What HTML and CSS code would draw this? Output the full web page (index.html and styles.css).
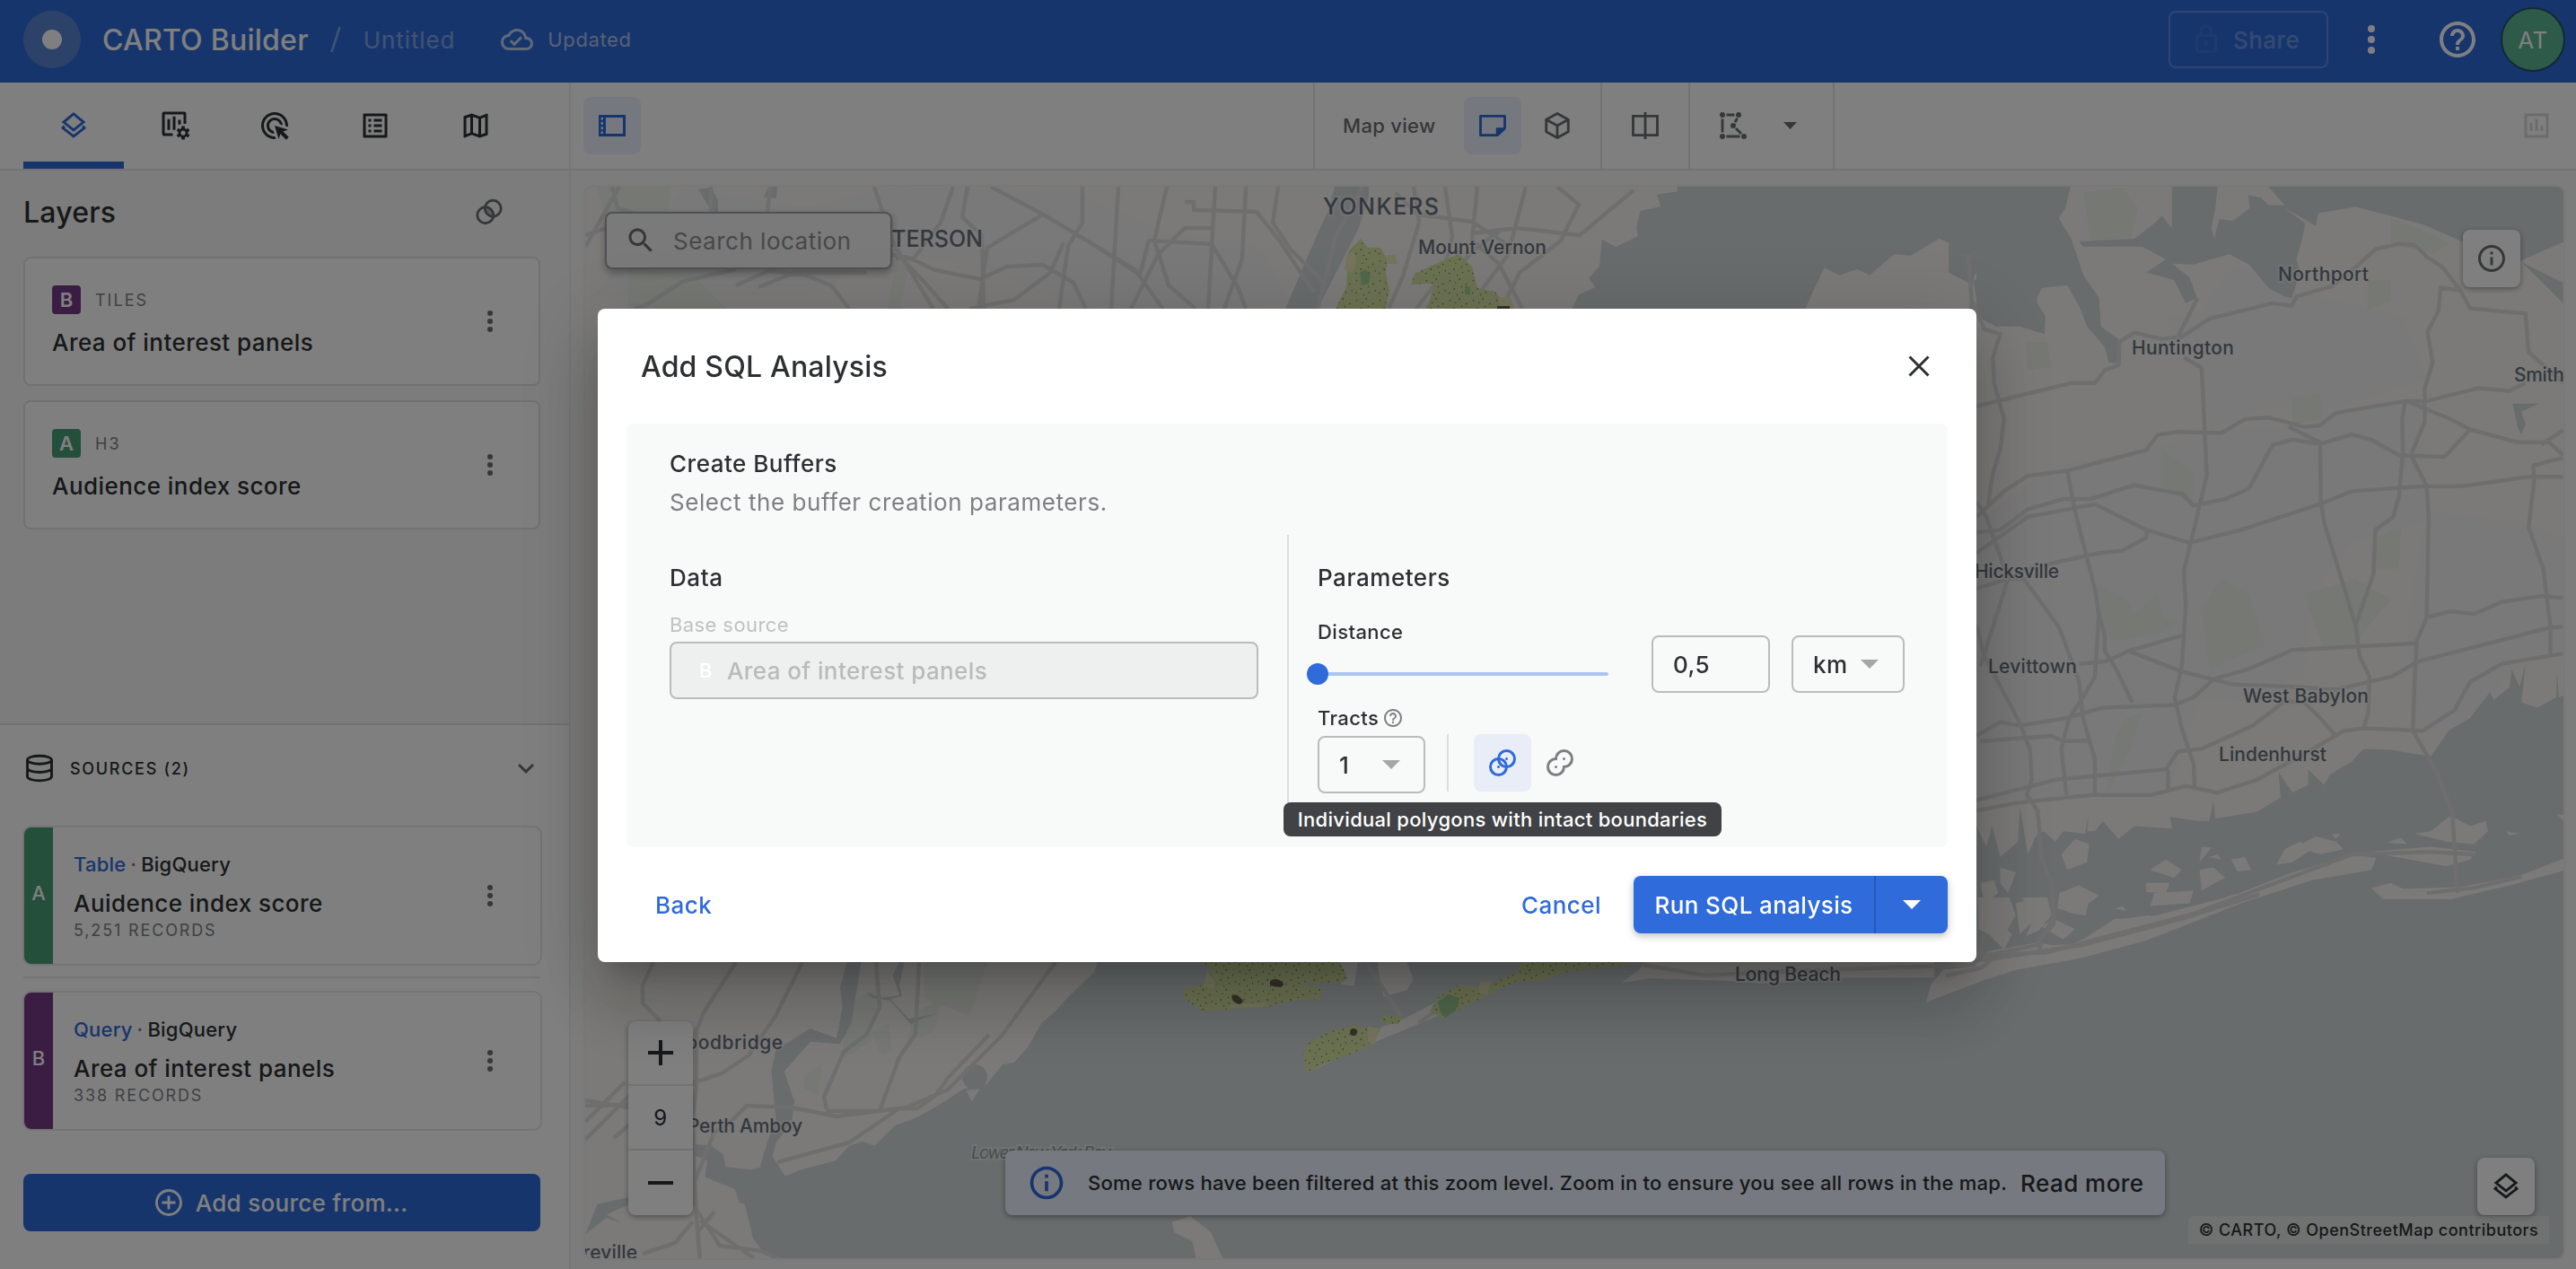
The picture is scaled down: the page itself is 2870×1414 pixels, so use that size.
FILE: index.html
```html
<!DOCTYPE html>
<html lang="en">
<head>
<meta charset="utf-8">
<title>CARTO Builder</title>
<link rel="stylesheet" href="styles.css">
</head>
<body>
<svg class="defs" width="0" height="0">
  <defs>
    <symbol id="i-layers" viewBox="0 0 24 24"><path d="M12 3.3 19.4 9.4 12 15.3 4.6 9.4zM5.2 12.3 4 13.7l8 6.2 8-6.2-1.200-1.400" fill="none" stroke="currentColor" stroke-width="1.9"/></symbol>
    <symbol id="i-more" viewBox="0 0 24 24"><circle cx="12" cy="6" r="2"/><circle cx="12" cy="12" r="2"/><circle cx="12" cy="18" r="2"/></symbol>
    <symbol id="i-help" viewBox="0 0 24 24"><path d="M11 18h2v-2h-2v2zm1-16C6.480 2 2 6.480 2 12s4.480 10 10 10 10-4.480 10-10S17.520 2 12 2zm0 18c-4.410 0-8-3.590-8-8s3.590-8 8-8 8 3.590 8 8-3.590 8-8 8zm0-14c-2.210 0-4 1.790-4 4h2c0-1.100.9-2 2-2s2 .9 2 2c0 2-3 1.750-3 5h2c0-2.250 3-2.500 3-5 0-2.210-1.790-4-4-4z"/></symbol>
    <symbol id="i-info" viewBox="0 0 24 24"><path d="M11 7h2v2h-2zm0 4h2v6h-2zm1-9C6.480 2 2 6.480 2 12s4.480 10 10 10 10-4.480 10-10S17.520 2 12 2zm0 18c-4.410 0-8-3.590-8-8s3.590-8 8-8 8 3.590 8 8-3.590 8-8 8z"/></symbol>
    <symbol id="i-caret" viewBox="0 0 20 10"><path d="M0 0h20L10 10z"/></symbol>
    <symbol id="i-overlap" viewBox="0 0 24 24"><g fill="none" stroke="currentColor" stroke-width="2"><circle cx="15" cy="9" r="6"/><circle cx="9" cy="15" r="6"/></g><circle cx="15" cy="9" r="1"/><circle cx="9" cy="15" r="1"/></symbol>
    <pattern id="hex" width="26" height="22" patternUnits="userSpaceOnUse"><rect width="26" height="22" fill="#d7e4a4"/><path d="M3 4l1 1.500M14 2l.5 2M21 9l1.500-1M8 13l.5 2M17 17l1 1.500M2 19l1.500-1M11 20l1 1M24 15l.5 1.500M9 7l1.500.5M16 11l1 1" stroke="#7d8560" stroke-width="1.200"/></pattern>
  </defs>
</svg>

<header class="topbar">
  <div class="logo"><i></i></div>
  <span class="brand">CARTO Builder</span>
  <svg class="slash" width="12" height="32" viewBox="0 0 12 32"><path d="M10.500 2 1.500 30" stroke="currentColor" stroke-width="2.500"/></svg>
  <span class="untitled">Untitled</span>
  <svg class="cloud" width="36" height="36" viewBox="0 0 24 24"><path d="M19.350 10.040C18.670 6.590 15.640 4 12 4 9.110 4 6.600 5.640 5.350 8.040 2.340 8.360 0 10.910 0 14c0 3.310 2.690 6 6 6h13c2.760 0 5-2.240 5-5 0-2.640-2.050-4.780-4.650-4.960zM19 18H6c-2.210 0-4-1.790-4-4 0-2.050 1.530-3.760 3.560-3.970l1.070-.11.5-.95C8.080 7.140 9.940 6 12 6c2.620 0 4.880 1.860 5.390 4.430l.3 1.500 1.530.11c1.560.1 2.780 1.410 2.780 2.960 0 1.650-1.350 3-3 3zm-9-3.820-2.090-2.090L6.500 13.500 10 17l6.010-6.010-1.410-1.410z"/></svg>
  <span class="updated">Updated</span>
  <div class="top-right">
    <div class="share"><svg width="36" height="36" viewBox="0 0 24 24"><path d="M18 8h-1V6c0-2.760-2.240-5-5-5S7 3.240 7 6v2H6c-1.100 0-2 .9-2 2v10c0 1.100.9 2 2 2h12c1.100 0 2-.9 2-2V10c0-1.100-.9-2-2-2zM9 6c0-1.660 1.340-3 3-3s3 1.340 3 3v2H9zm9 14H6V10h12zm-6-3c1.100 0 2-.9 2-2s-.9-2-2-2-2 .9-2 2 .9 2 2 2z"/></svg><span>Share</span></div>
    <svg class="t-more" width="48" height="48"><use href="#i-more"/></svg>
    <svg class="t-help" width="48" height="48"><use href="#i-help"/></svg>
    <div class="avatar">AT</div>
  </div>
</header>

<div class="workspace">
  <aside class="sidebar">
    <nav class="tabs">
      <div class="tab active"><svg width="36" height="36"><use href="#i-layers"/></svg></div>
      <div class="tab"><svg width="44" height="40" viewBox="-2.700 0 29.400 26.700"><path d="M11 20H4.500c-.5 0-.5 0-.5-.5v-15c0-.5 0-.5.5-.5h15c.5 0 .5 0 .5.5V12M8 8.500V16.500M12 6.500V16.500M16 9v3.500" fill="none" stroke="currentColor" stroke-width="2"/><circle cx="18.700" cy="18.700" r="2.700" fill="none" stroke="currentColor" stroke-width="1.900"/><path d="M18.700 13.700v2M18.700 21.700v2M14.400 16.200l1.700 1M21.300 20.200l1.700 1M14.400 21.200l1.700-1M21.300 17.200l1.700-1" stroke="currentColor" stroke-width="2.400"/></svg></div>
      <div class="tab"><svg width="36" height="36" viewBox="0 0 24 24"><path d="M11.710 17.990C8.530 17.840 6 15.220 6 12c0-3.310 2.690-6 6-6 3.220 0 5.840 2.530 5.990 5.710l-2.100-.63C15.480 9.310 13.890 8 12 8c-2.210 0-4 1.790-4 4 0 1.890 1.310 3.480 3.080 3.890zM22 12c0 .3-.01.6-.04.9l-1.970-.59C20 12.210 20 12.100 20 12c0-4.420-3.580-8-8-8s-8 3.580-8 8 3.580 8 8 8c.1 0 .21 0 .31-.01l.59 1.970C12.600 21.990 12.300 22 12 22 6.480 22 2 17.520 2 12S6.480 2 12 2s10 4.480 10 10zm-3.770 4.260L22 15l-10-3 3 10 1.260-3.770 4.270 4.270 1.980-1.980z"/></svg></div>
      <div class="tab"><svg width="36" height="36" viewBox="0 0 24 24"><path d="M19 5v14H5V5h14m1.100-2H3.900c-.5 0-.9.4-.9.9v16.200c0 .4.4.9.9.9h16.200c.4 0 .9-.5.9-.9V3.900c0-.5-.5-.9-.9-.9zM11 7h6v2h-6V7zm0 4h6v2h-6v-2zm0 4h6v2h-6zM7 7h2v2H7zm0 4h2v2H7zm0 4h2v2H7z"/></svg></div>
      <div class="tab"><svg width="36" height="36" viewBox="0 0 24 24"><path d="M20.500 3l-.16.03L15 5.100 9 3 3.360 4.900c-.21.07-.36.25-.36.48V20.500c0 .28.22.5.5.5l.16-.03L9 18.900l6 2.100 5.640-1.900c.21-.07.36-.25.36-.48V3.500c0-.28-.22-.5-.5-.5zM10 5.470l4 1.400v11.660l-4-1.400V5.470zm-5 .99l3-1.010v11.700l-3 1.160V6.460zm14 11.080l-3 1.010V6.860l3-1.160v11.840z"/></svg></div>
    </nav>
    <section class="layers">
      <div class="layers-head"><h2>Layers</h2><svg width="36" height="36" viewBox="0 0 24 24"><g fill="none" stroke="currentColor" stroke-width="1.900"><circle cx="14.800" cy="9.500" r="6"/><circle cx="9.200" cy="14.500" r="6"/></g><path d="M9.500 9.500c3 0 5.500 2.500 5 5.500-3.500 0-6-2.500-5-5.500z" opacity=".45"/></svg></div>
      <article class="layer">
        <div><p class="kind"><b class="purple">B</b><span>TILES</span></p><h3>Area of interest panels</h3></div>
        <svg width="36" height="36"><use href="#i-more"/></svg>
      </article>
      <article class="layer">
        <div><p class="kind"><b class="green">A</b><span>H3</span></p><h3>Audience index score</h3></div>
        <svg width="36" height="36"><use href="#i-more"/></svg>
      </article>
    </section>
    <section class="sources">
      <div class="sources-head">
        <svg width="36" height="36" viewBox="0 0 24 24"><g fill="none" stroke="currentColor" stroke-width="1.900"><ellipse cx="12" cy="5.800" rx="9" ry="3"/><path d="M3 5.800v12.400c0 1.700 4 3 9 3s9-1.300 9-3V5.800M3 12c0 1.700 4 3 9 3s9-1.300 9-3"/></g></svg>
        <span>SOURCES (2)</span>
        <svg class="chev" width="36" height="36" viewBox="0 0 24 24"><path d="M16.590 8.590 12 13.170 7.410 8.590 6 10l6 6 6-6z"/></svg>
      </div>
      <article class="source">
        <b class="strip green">A</b>
        <div><p class="conn"><em>Table</em><s>·</s><span>BigQuery</span></p><h3>Auidence index score</h3><p class="records">5,251 RECORDS</p></div>
        <svg width="36" height="36"><use href="#i-more"/></svg>
      </article>
      <hr>
      <article class="source">
        <b class="strip purple">B</b>
        <div><p class="conn"><em>Query</em><s>·</s><span>BigQuery</span></p><h3>Area of interest panels</h3><p class="records">338 RECORDS</p></div>
        <svg width="36" height="36"><use href="#i-more"/></svg>
      </article>
      <div class="add-source"><svg width="36" height="36" viewBox="0 0 24 24"><g fill="none" stroke="currentColor" stroke-width="1.900"><circle cx="12" cy="12" r="9"/><path d="M12 7v10M7 12h10"/></g></svg><span>Add source from...</span></div>
    </section>
  </aside>

  <main class="main">
    <div class="toolbar">
      <div class="tool on"><svg width="36" height="36" viewBox="0 0 24 24"><path fill-rule="evenodd" d="M2 4h20v16H2zM3.700 6v1.700h1.600V6zM3.700 9.200v2h1.600v-2zM3.700 12.800v2h1.600v-2zM3.700 16.300V18h1.600v-1.700zM7.300 6v12H20V6z"/></svg></div>
      <div class="map-tools">
        <div class="cell view"><span class="mv">Map view</span>
          <div class="tool on"><svg width="36" height="36" viewBox="0 0 24 24"><path d="M21 4.900v9L15.500 19.100H3V4.900z" fill="none" stroke="currentColor" stroke-width="1.900" stroke-linejoin="round"/><path d="M14.500 20v-6.500H22z"/></svg></div>
          <div class="tool"><svg width="36" height="36" viewBox="0 0 24 24"><path d="M12 3 20.200 7.500v9L12 21 3.800 16.500v-9zM3.800 7.500 12 12l8.200-4.500M12 12v9" fill="none" stroke="currentColor" stroke-width="1.900" stroke-linejoin="round"/></svg></div></div>
        <div class="cell split"><svg width="36" height="36" viewBox="0 0 24 24"><path d="M3 4.900h18v14.200H3zM12 2v20" fill="none" stroke="currentColor" stroke-width="1.900"/></svg></div>
        <div class="cell poly"><svg width="36" height="36" viewBox="0 0 24 24"><path d="M7 4h6M4 7v10M7 20h10M15 6.500l-1.600 3M14 14l4 4" fill="none" stroke="currentColor" stroke-width="1.900"/><circle cx="4" cy="4" r="2"/><circle cx="16" cy="4" r="2"/><circle cx="12" cy="12" r="2"/><circle cx="20" cy="20" r="2"/><circle cx="4" cy="20" r="2"/></svg><svg class="caret" width="15" height="8" viewBox="0 0 20 10" preserveAspectRatio="none"><path d="M0 0h20L10 10z"/></svg></div>
      </div>
      <svg class="dim" width="36" height="36" viewBox="0 0 24 24"><path d="M4 4h16v16H4zM8 10v6M12 7v9M16 12v4" fill="none" stroke="currentColor" stroke-width="1.900"/></svg>
    </div>

    <div class="map">
      <svg class="basemap" width="2204" height="1194" viewBox="652 208 2204 1194">
        <rect class="land" x="652" y="208" width="2204" height="1194"/>
        <g transform="matrix(.44005 0 0 .57403 2180 180)">
          <path class="urban" d="M50 700 250 590 480 560 640 520 900 510 960 480 1180 470 1190 700 1000 740 900 840 880 1000 760 1050 620 1040 560 1180 520 1230 50 1240zM520 300 620 290 700 200 900 260 1130 300 1190 420 960 480 780 480 640 520 620 400zM1190 680 1440 700 1535 730V950L1440 970 1280 1090 1160 1100 1140 900z"/>
          <path class="park" d="M350 820 430 850 450 880 510 835 520 885 565 895 500 920 400 930 360 900zM620 870 670 810 740 840 780 940 700 965 640 985zM880 840 1010 810 1100 850 1000 940 930 950zM1060 730 1125 710 1120 790 1060 790zM320 60 420 50 460 90 440 150 340 155zM1040 230 1100 230 1100 270 1040 290zM430 1080 470 1070 440 1140 380 1230 400 1120zM1100 110 1200 140 1250 160 1200 180 1100 160zM520 560 600 600 600 660 520 640zM850 460 920 450 930 500 850 510zM175 350 230 350 240 400 180 405z"/>
        </g>
        <path class="urban" d="M660 330 760 210 900 230 1000 208 1200 215 1300 260 1400 270 1440 340 1200 344 1100 300 1000 280 900 330z"/>
        <path class="park" d="M665 208h82l-5 50-60 12zM700 300l70 5 40 39H700zM1000 285h15l-12 59h-15zM940 1120l40-20-10 60-30 20zM1030 1072h70l-20 60-50-20zM1020 1130l30-20-10 40-30 10zM970 1150l20-10 4 30-12 6zM895 1200l22-16-6 36-14-6z"/>
        <g class="water">
          <path transform="matrix(.91200 0 0 .33333 1440 0)" d="M470 600V640L445 650 450 690 425 705 420 760 422 790 395 825 378 800 375 890 362 930 370 960 350 985 340 1040H625L640 950 650 895 668 920 690 900 705 920 735 850 755 855 790 797 804 815V600zM838 1040 832 940 850 910 866 880 868 960 872 1040zM880 990 900 905 912 950 908 1040H885z"/>
          <path transform="matrix(.44005 0 0 .57403 2180 180)" d="M-20 40H290L275 90 258 110 290 150 320 220 360 265 365 320 410 345 405 392 385 390 375 360 330 320 310 280 280 240 215 245 200 270 225 300 222 335 160 320 100 320 60 305 30 290 40 240-20 215V182L30 182 80 170 150 142 160 175 208 180 208 208 175 210 150 270 105 275 130 230 125 195 90 190 45 220 35 270 50 300V40z"/>
          <path transform="matrix(.44005 0 0 .57403 2180 180)" d="M-20 40H290L275 90 258 110 290 150 208 180 160 175 150 142 80 170 30 182-20 182z"/>
          <path transform="matrix(.44005 0 0 .57403 2180 180)" d="M208 180 290 150 320 220 360 265 365 320 310 280 280 240 215 245 175 230z"/>
          <path transform="matrix(.44005 0 0 .57403 2180 180)" d="M545 40H662L655 90 645 130 652 150 665 112 700 115 742 90 738 65 770 70 790 85 830 85 780 40H1540V155L1440 188 1425 195 1280 155 1180 122 1010 88 915 100 910 125 830 90 882 120 875 150 860 190 870 215 848 265 830 262 790 245 740 200 690 180 600 200 545 198 590 225 608 265 580 275 550 230 480 215 530 190 470 165 320 165 310 155 450 150 500 120 520 105 545 130zM1430 195 1535 235V275L1490 240zM1408 470 1475 470 1430 485 1440 510 1430 530 1420 515z"/>
          <path transform="matrix(.44005 0 0 .57403 2180 180)" d="M1540 1035 1525 1040 1520 990 1518 1040 1470 1060 1430 1050 1440 975 1425 1020 1405 985 1400 1020 1360 1045 1350 1030 1300 1080 1245 1105 1200 1155 1100 1142 1030 1140 1000 1165 945 1190 930 1210 890 1180 890 1210 850 1225 815 1185 820 1235 760 1262 700 1270 655 1275 650 1240 640 1280 612 1280 540 1272 545 1295 450 1290 410 1315 370 1280 350 1300 330 1300 335 1265 325 1305 270 1300 250 1320 220 1300 200 1310 180 1345 160 1250 155 1320 110 1350 90 1290 75 1330 50 1290V1620H1540z"/>
          <path d="M1487 208h38l0 12-12 36-45 88h-36l30-70 18-40z"/>
          <path transform="matrix(.51020 0 0 .33333 640 1060)" d="M1145 20 1135 70 1080 150 1050 200 1020 240 990 320 960 372 935 378 900 445 850 460 820 490 790 520 740 560 700 582 655 650 630 635 600 650 570 700 490 732 460 752 430 680 435 610 425 690 410 720 385 730 330 720 325 680 300 650 262 645V682L290 700 285 755 310 770 350 795 360 840 372 845 390 960 410 1000 455 1030H4400V20z"/>
          <path transform="matrix(.51020 0 0 .33333 640 1060)" d="M598 20H628L605 240 580 310 515 302 458 402 480 500 475 570 440 640 425 730 405 720 425 620 440 560 430 400 440 330 515 258 572 290 585 190 580 120zM24 945 50 845 118 822V848L70 880 105 910 70 890 50 915 24 945zM635 135 670 155 710 148 695 80 710 36 720 40 710 110 715 150 690 160 730 225 795 208 760 225 735 245 690 165 650 155z"/>
          <path d="M778 211l14-2 8 14 0 16-10-8zM856 208h10l-1 13-14-1z"/>
        </g>
        <g class="land">
          <path transform="matrix(.51020 0 0 .33333 640 1060)" d="M855 465 890 455 905 400 885 460 868 502zM1305 905 1345 885 1390 940 1417 1030H1357L1350 970 1310 940z"/>
          <path transform="matrix(.47190 0 0 .33333 1400 1060)" d="M862 105 905 60 915 30H1600V88L1400 88 1200 108 1100 98 930 90zM285 30 355 36 370 95 355 130 300 152 290 90zM345 228 430 165 470 180 430 215 290 297 120 405 112 340 280 260zM190 30H240L230 115 200 110z"/>
          <path transform="matrix(.47190 0 0 .33333 2130 1000)" d="M34 350 45 290 75 240 130 235 160 215 180 180 300 150 330 160 400 155 440 120 480 75 560 60 600 72 700 20 760-10 830-20 640 82 400 172 170 277zM-60 220 30 220 20 268-60 265zM155 0H230L245 60 225 110 200 150 160 90zM260 0H320L330 60 300 110 270 130 290 60zM350 0H420L410 60 370 50z"/>
          <path transform="matrix(.44005 0 0 .57403 2180 180)" d="M60 1568 240 1540 330 1505 400 1470 470 1470 700 1425 850 1380 1000 1345 1062 1352 1050 1375 900 1395 720 1440 480 1512 320 1545 160 1568zM1050 1410 1100 1400 1130 1412 1280 1408 1430 1385 1540 1352V1376L1400 1405 1250 1432H1080zM1160 1305 1200 1300 1250 1270 1300 1290 1340 1280 1345 1300 1310 1325 1240 1320zM1040 1340 1200 1330 1315 1340 1300 1355 1240 1368zM1390 1300 1425 1305 1400 1308zM1520 1268H1540V1282z"/>
          <path transform="matrix(.44005 0 0 .57403 2180 180)" d="M265 1345 300 1315 335 1325 330 1360 280 1375zM260 1420 310 1405 360 1425 300 1460 255 1450zM480 1400 540 1400 530 1420 480 1418zM490 1375 530 1355 570 1375 550 1390zM620 1330 645 1332 615 1360zM615 1375 650 1370 680 1390 620 1415zM695 1355 730 1350 745 1375 710 1378zM810 1365 830 1335 870 1320 900 1335 850 1360zM860 1330 910 1310 960 1320 980 1335 920 1345zM60 1400 95 1395 105 1420 70 1440zM110 1370 150 1380 130 1420 110 1400zM55 1450 90 1460 80 1500 55 1490zM150 1440 195 1430 200 1470 160 1500zM110 1480 140 1500 120 1530 95 1510zM215 1485 245 1470 300 1490 270 1510zM1090 1322 1125 1312 1140 1325zM950 1306 970 1305 960 1315zM500 1420 600 1415 590 1440 490 1445zM400 1450 420 1445 430 1455zM640 1350 660 1345 670 1355z"/>
        </g>
        <ellipse class="waterfill" cx="1086" cy="1200" rx="14" ry="14"/>
        <g class="roads">
          <path d="M652 275 690 208M682 208l6 24 40 12M792 208v80M858 208l-6 60M974 208l20 60 36 60 10 16M1062 208l-14 40-30 40-20 0M1078 208l-6 34 22 20 2 82M1104 208l60 32 60 36 40 24 50 70M1206 208v40l-16 26-10 70M1246 208l-8 136M1320 225h10v9l70 2 24 30 40 60M1354 208l-8 136M1388 208l-4 80-20 56M1424 208l-6 40 20 30 40 40M1160 240l-60 36-10 68M1164 240l50 30 56 36 10-38 70 4 30 50 8 22M990 283l22 4 30 14 50 10 30-14 40-2 34 20 16 34M1006 290l20 20 30 34M820 300l-60 14-40 26-14 4M820 318l36-16 40 4 30 12 20 26M845 320l40-16 80 0M1185 270l-15 34-40 30-50 10M1300 208l-14 60 16 50 30 26M1260 344l30-60 30-30 30 0M652 262l30-10"/>
          <path d="M1468 344l20-80 30-56M1555 215l25 24 60 8 46 30M1575 208l6 40-18 60-16 36M1610 208l8 56-10 40-30 40M1646 208l-6 60 30 26 26 50M1700 208l-20 76-30 40-20 20M1735 208l24 20-20 40-46 36-20 40M1640 260l50-6 70 8 60-50M1590 344l50-64 30-22"/>
          <path d="M728 1072 716 1098v20l20 20M820 1072l-36 56-8 20v60l-4 36 2 100M894 1072l-30 60-30 44-30 20-60 20-60 52M652 1232h20l30-2M652 1250l44-44M652 1270l60-60M976 1072l4 50-14 30-26 20-22 50 3 14M1024 1072l-4 80-18 26-22 60-60 0M1176 1072l-60 82-60 60-46 20-78 10-50-10-50-2-20 20-20 12M866 1295l80-22 56-38h20l20-14 14-20 46-48M794 1266l-20 50 2 40 4 50M716 1397l36-12 20-24M776 1348l26 40 46 6 18 8M652 1226l60 10 32 0M796 1350l-20 24M780 1360l60 42"/>
          <path d="M1522 1072l40 62M1830 1075l70 12 70-4 232-8M1580 1140l26-18"/>
          <g transform="matrix(.44005 0 0 .57403 2180 180)">
            <path class="hw" d="M50 475 130 460 290 430 350 430 375 405 410 395 412 350 450 332 520 345 570 340 640 305 800 275 848 280 860 262 950 242 1010 205 1060 170 1120 160 1160 162 1190 185 1230 205 1275 250 1300 285 1440 295 1448 370 1485 395 1535 430M560 340 610 265M30 182 38 270 70 325 110 335 92 380 95 430 120 500 110 560 90 610 80 665"/>
            <path class="hw" d="M50 690 120 640 180 610 280 600 480 560 510 530 560 525 670 527 730 500 790 497 880 515 920 512 960 488 1135 465 1190 465 1320 440 1400 445 1440 430M50 720 110 715 180 675 270 655 340 655 400 640 450 628 530 640 570 645 600 668 680 655 740 635 800 550 850 540 920 548 1000 530 1050 540 1120 570 1235 573 1300 520 1250 500 1140 465M1300 520 1420 545 1500 545 1535 570M1480 550 1535 522M50 760 180 690 350 665 480 715 590 740 720 715 920 665 1000 640 1180 630 1280 630 1450 612H1535"/>
            <path class="hw" d="M575 380 620 400 628 520 633 610 605 700 575 795 580 860 570 980 552 1040 570 1100 600 1170 602 1215M280 600 300 680 350 830 360 880 350 1000 320 1040 285 1080 265 1140 278 1230M50 660 75 690 130 810 60 980M130 810 170 810 260 905 310 1010 320 1080 350 1160 350 1230M50 900 70 960 160 1090 185 1140 190 1200 178 1230 205 1260 215 1350 240 1400 245 1470 210 1510V1530M45 830 130 810 180 790 360 760 420 755 480 730 482 712M360 880 375 920V950L400 980 445 1050M310 975 380 970 435 950 570 920M435 950 570 990 700 1015 860 1020 960 1025 1100 1000 1170 970 1500 905 1535 903"/>
            <path class="hw" d="M840 515 920 545 922 660 930 700 1010 900 1020 960 1045 1000 1042 1070 1030 1100M1010 900 1055 800 1060 715 1105 690 1120 650 1130 560 1128 500 1135 465M1275 250 1225 245 1220 290 1192 330 1205 390 1185 440V505L1150 570 1190 630 1195 690 1190 885 1165 930 1160 1000 1155 1105 1215 1185 1255 1265 1268 1420M1190 885 1250 873 1310 878 1380 855 1480 843 1535 847M1535 575 1460 590 1462 620 1448 710 1485 790 1503 900V955M50 1115 110 1088 160 1095 280 1080 370 1060 550 1055 600 1040 650 1005 740 985 850 948 1165 935M60 1125 240 1115 270 1125 340 1124M50 1240 250 1200 530 1180 560 1145 620 1140 750 1095 830 1048 880 1050 920 1080 960 1115M50 1260 150 1245 340 1230 490 1230 580 1212 660 1225 760 1200 880 1150 980 1105 1030 1100 1180 1105 1260 1065 1300 1010 1380 975 1535 955M535 1180V1220M60 1550 200 1535M50 1540 230 1535 600 1460 1000 1345 1200 1340 1310 1345M1190 1420 1310 1410 1430 1388"/>
          </g>
          <g transform="matrix(.47190 0 0 .33333 2130 1000)"><path class="hw" d="M80 262 165 235 190 205 300 180 400 160 640 70 820-10M330-20 335 90 303 140V180M170 120 160 180 190 205M190 190 310 155"/></g>
        </g>
        <g>
          <g class="h3">
            <path d="M1488 344l12-24 2-40 14-14 8 10h14l8 14-2 14 4 20-4 20zM1572 317l4-12 30-14 20-8 14 14 6 24 20 4 14 19h-90l8-28z"/>
            <path d="M1341 1072l8 8-10 18-18 2-3 12 21 15 25-2 46-3 30-7 31-2 2-13-28-3 52-3 5-4-9-18z"/>
            <path d="M1452 1175l5-12 28-16 19-2 4-6 5 6h26l-10 19-18 8-36 14-19 9zM1537 1140l5-9 21 1-5 9zM1593 1127l10-17 23-13 29 5 19-12 16-6 5-12h116v4l-59 5-31 11-33 2-33 16-24 12-23 13z"/>
          </g>
          <path class="h3y" d="M1500 286l8-8 4 14-6 12-8-4zM1545 284l10 0 2 10-12 0zM1670 332l12-2 6 14h-18zM1649 1094l12 0-4 14-10-2zM1524 1143l14 4-8 18-6-4zM1345 1082l10 14-4 6-10-4zM1372 1119l40-2-6 5-36 1z"/>
          <path class="h3g" d="M1515 304l6-4 6 6-2 10-8 2zM1602 1116l12-8 12 4-4 14-12 8-6-8zM1632 318l6 2v8h-6z"/>
          <path class="h3b" d="M1415 1093q6-4 12 0 6 4 0 7-6 0-12-2zM1372 1110q6-4 10 2 6 4-1 7-8-1-9-9zM1668 341h14v4h-14z"/><circle class="h3b" cx="1508" cy="1150" r="4"/>
        </g>
        <g class="labels">
          <text x="1474" y="239" class="city" textLength="129">YONKERS</text>
          <text x="1095" y="275" class="city" text-anchor="end">PATERSON</text>
          <text x="1580" y="283" textLength="143">Mount Vernon</text>
          <text x="2538" y="313" textLength="101">Northport</text>
          <text x="2375" y="395" textLength="114">Huntington</text>
          <text x="2801" y="425" textLength="104">Smithtown</text>
          <text x="2200" y="644" textLength="94">Hicksville</text>
          <text x="2215" y="750" textLength="99">Levittown</text>
          <text x="2499" y="783" textLength="140">West Babylon</text>
          <text x="2472" y="848" textLength="120">Lindenhurst</text>
          <text x="1933" y="1093" textLength="118">Long Beach</text>
          <text x="744" y="1169" textLength="128">Woodbridge</text>
          <text x="766" y="1262" textLength="128">Perth Amboy</text>
          <text x="612" y="1403" textLength="98">Sayreville</text>
          <text x="1082" y="1291" textLength="156" class="bay">Lower New York Bay</text>
        </g>
      </svg>
      <div class="search"><svg width="36" height="36" viewBox="0 0 24 24"><path d="M15.500 14h-.79l-.28-.27C15.410 12.590 16 11.110 16 9.500 16 5.910 13.090 3 9.500 3S3 5.910 3 9.500 5.910 16 9.500 16c1.610 0 3.090-.59 4.230-1.570l.27.28v.79l5 4.990L20.490 19zm-6 0C7.010 14 5 11.990 5 9.500S7.010 5 9.500 5 14 7.010 14 9.500 11.990 14 9.500 14z"/></svg><span>Search location</span></div>
      <div class="fab info"><svg width="36" height="36"><use href="#i-info"/></svg></div>
      <div class="zoom"><div><svg width="28" height="28" viewBox="0 0 28 28"><path d="M14 0v28M0 14h28" stroke="currentColor" stroke-width="4"/></svg></div><div>9</div><div><svg width="28" height="28" viewBox="0 0 28 28"><path d="M0 14h28" stroke="currentColor" stroke-width="4"/></svg></div></div>
      <div class="banner"><svg width="44" height="44"><use href="#i-info"/></svg><span class="msg">Some rows have been filtered at this zoom level. Zoom in to ensure you see all rows in the map.</span><span class="more">Read more</span></div>
      <div class="fab lay"><svg width="36" height="36"><use href="#i-layers"/></svg></div>
      <div class="attr"><span>© CARTO, © OpenStreetMap contributors</span></div>
    </div>
  </main>
</div>

<div class="overlay">
  <div class="modal" role="dialog">
    <div class="m-head"><h1>Add SQL Analysis</h1><svg width="36" height="36" viewBox="0 0 24 24"><path d="M5 5l14 14M19 5 5 19" stroke="currentColor" stroke-width="2"/></svg></div>
    <div class="m-body">
      <p class="lead">Create Buffers</p>
      <p class="sub">Select the buffer creation parameters.</p>
      <div class="cols">
        <div class="col-l">
          <h4>Data</h4>
          <label class="off">Base source</label>
          <div class="field disabled"><i>B</i><span>Area of interest panels</span></div>
        </div>
        <div class="col-r">
          <h4>Parameters</h4>
          <div class="dist">
            <div class="slide"><label>Distance</label><div class="slider"><i></i></div></div>
            <div class="field num"><span>0,5</span></div>
            <div class="field unit"><span>km</span><svg class="caret" width="20" height="10"><use href="#i-caret"/></svg></div>
          </div>
          <div class="tract-l"><label>Tracts</label><svg width="24" height="24"><use href="#i-help"/></svg></div>
          <div class="tracts">
            <div class="field one"><span>1</span><svg class="caret" width="20" height="10"><use href="#i-caret"/></svg></div>
            <div class="vr"></div>
            <div class="tg sel"><svg width="36" height="36"><use href="#i-overlap"/></svg><div class="tip"><span>Individual polygons with intact boundaries</span></div></div>
            <div class="tg"><svg width="36" height="36" viewBox="0 0 24 24"><path d="M9 9A6 6 0 1 1 15 15A6 6 0 1 1 9 9z" fill="none" stroke="currentColor" stroke-width="2"/><circle cx="15" cy="9" r="1"/><circle cx="9" cy="15" r="1"/></svg></div>
          </div>
        </div>
      </div>
    </div>
    <div class="m-foot">
      <span class="link">Back</span>
      <div class="acts"><span class="link">Cancel</span>
        <div class="run"><div class="run-t"><span>Run SQL analysis</span></div><div class="run-c"><svg width="20" height="10"><use href="#i-caret"/></svg></div></div></div>
    </div>
  </div>
</div>
</body>
</html>
```
FILE: styles.css
```css
* { box-sizing: border-box; }
body { margin: 0; width: 2870px; height: 1414px; overflow: hidden; display: flex; flex-direction: column; font-family: Inter, sans-serif; font-size: 26px; letter-spacing: .45px; color: #2c3032; background: #fff; }
h1, h2, h3, h4, p { margin: 0; font-weight: 500; }
svg { fill: currentColor; flex: none; display: block; }
.defs { position: absolute; }

.topbar { height: 92px; flex: none; display: flex; align-items: center; padding: 0 12px 4px 26px; background: #2f6bda; color: #fff; }
.logo { width: 64px; height: 64px; border-radius: 50%; background: #5884d0; display: flex; align-items: center; justify-content: center; margin-right: 24px; }
.logo i { width: 22px; height: 22px; border-radius: 50%; background: #fff; }
.brand { font-size: 32px; font-weight: 500; letter-spacing: .25px; }
.slash { margin: 0 25px 0 24px; color: rgba(255,255,255,.4); }
.untitled { font-size: 26px; letter-spacing: .9px; color: rgba(255,255,255,.42); }
.cloud { margin: 0 16px 0 51px; color: rgba(255,255,255,.7); }
.updated { font-size: 22px; letter-spacing: .6px; color: rgba(255,255,255,.62); }
.top-right { margin-left: auto; display: flex; align-items: center; }
.share { width: 178px; height: 64px; border: 2px solid rgba(255,255,255,.22); border-radius: 8px; display: flex; align-items: center; padding-left: 22px; gap: 12px; color: rgba(255,255,255,.3); font-weight: 500; }
.share svg { color: rgba(255,255,255,.06); }
.t-more { margin-left: 24px; }
.t-help { margin-left: 48px; }
.avatar { width: 72px; height: 72px; margin-left: 24px; border-radius: 50%; border: 2px solid #24506e; background: #5bb592; display: flex; align-items: center; justify-content: center; font-size: 26px; }

.workspace { flex: 1; display: flex; min-height: 0; }
.sidebar { width: 636px; flex: none; border-right: 2px solid #ececed; display: flex; flex-direction: column; background: #f8f8f8; }
.tabs { height: 98px; flex: none; display: flex; padding-left: 26px; border-bottom: 2px solid #e6e7e8; background: #fff; }
.tab { width: 112px; display: flex; align-items: center; justify-content: center; }
.tab.active { color: #2f6bda; box-shadow: inset 0 -8px #2f6bda; }
.layers { height: 616px; flex: none; padding: 0 32px 0 26px; display: flex; flex-direction: column; gap: 16px; }
.layers-head { height: 80px; padding: 12px 39px 0 0; display: flex; align-items: center; justify-content: space-between; }
.layers-head svg { color: #6c6f71; }
h2 { font-size: 32px; letter-spacing: .2px; }
.layer { height: 144px; flex: none; padding: 28px 36px 0 30px; border: 2px solid #e2e3e3; border-radius: 8px; background: #fff; display: flex; justify-content: space-between; }
.layer > svg, .source > svg { color: #6c6f71; margin-top: 24px; }
.kind { display: flex; align-items: center; gap: 16px; height: 36px; font-size: 18px; letter-spacing: 2px; color: #808284; font-weight: 400; }
.kind b { width: 32px; height: 32px; border-radius: 4px; color: #fff; font-size: 22px; letter-spacing: 0; font-weight: 600; display: flex; align-items: center; justify-content: center; }
.purple { background: #763b88; }
.green { background: #479e77; }
h3 { font-size: 26px; line-height: 32px; }
.layer h3 { margin-top: 14px; }
.sources { flex: 1; border-top: 2px solid #e2e3e3; background: #fff; padding: 0 32px 0 26px; }
.sources-head { height: 96px; display: flex; align-items: center; font-size: 18px; letter-spacing: 1.7px; gap: 16px; font-weight: 500; }
.sources-head .chev { margin-left: auto; margin-right: -2px; color: #6c6f71; }
.source { height: 156px; margin: 0 -2px 0 -1px; border: 2px solid #e8e8e8; border-radius: 10px; overflow: hidden; display: flex; }
.sources-head + .source { margin-top: 16px; }
.source > div { padding: 25px 0 0 23px; flex: 1; }
.source > svg { margin: 58px 38px 0 0; }
.strip { width: 32px; color: #fff; font-size: 22px; letter-spacing: 0; font-weight: 500; display: flex; align-items: center; justify-content: center; padding-bottom: 6px; }
.conn { font-size: 22px; line-height: 32px; letter-spacing: .2px; display: flex; gap: 5px; }
.conn em { font-style: normal; color: #2f6bda; }
.conn s { text-decoration: none; color: #777; }
.source h3 { margin-top: 12px; }
.records { font-size: 18px; line-height: 24px; margin-top: 2px; letter-spacing: 1.85px; color: #808284; font-weight: 400; }
hr { border: 0; height: 2px; background: #e8e8e8; margin: 12px 0 14px; }
.add-source { height: 64px; margin-top: 48px; border-radius: 8px; background: #2f6bda; color: #fff; font-weight: 500; letter-spacing: .3px; display: flex; align-items: center; justify-content: center; gap: 12px; padding-right: 4px; }

.main { flex: 1; display: flex; flex-direction: column; background: #f8f8f8; min-width: 0; }
.toolbar { height: 98px; flex: none; border-bottom: 2px solid #e6e7e8; background: #fff; display: flex; align-items: center; padding: 0 26px 0 14px; color: #6c6f71; }
.tool { width: 64px; height: 64px; border-radius: 8px; display: flex; align-items: center; justify-content: center; }
.tool.on { background: #eaf1fd; color: #2f6bda; }
.map-tools { display: flex; height: 96px; margin-left: 749px; }
.cell { border-left: 2px solid #e6e7e8; display: flex; align-items: center; justify-content: center; }
.view { width: 320px; padding-left: 31px; justify-content: flex-start; gap: 8px; }
.mv { width: 127px; font-size: 22px; font-weight: 500; letter-spacing: .3px; }
.split { width: 98px; }
.poly { width: 163px; border-right: 2px solid #e6e7e8; justify-content: flex-start; padding-left: 30px; gap: 38px; }
.dim { margin-left: auto; color: #d8d9da; }

.map { position: relative; flex: 1; margin: 18px 14px 12px 16px; border-radius: 8px; overflow: hidden; background: #d2dadb; box-shadow: 0 0 0 2px #f0f1f1; }
.basemap .land { fill: #f7f5f0; }
.urban { fill: #f3f2f3; }
.park { fill: #ecf0e8; }
.water, .waterfill { fill: #d0d8da; }
.roads path { fill: none; stroke: #dfddde; stroke-width: 4.500; stroke-linejoin: round; }
.roads .hw { vector-effect: non-scaling-stroke; stroke-width: 4.500; }
.h3 path { fill: url(#hex); }
.h3y { fill: #ece9bb; }
.h3g { fill: #9fcf98; }
.h3b { fill: #6b6350; }
.labels text { font-family: Inter, sans-serif; letter-spacing: 0; font-size: 21px; font-weight: 500; fill: #66707c; stroke: #f4f4f2; stroke-width: 4px; stroke-opacity: .5; paint-order: stroke; }
.labels .city { font-size: 25px; }
.labels .bay { font-size: 19px; font-weight: 400; font-style: italic; fill: #8f9ba3; }
.search { position: absolute; left: 22px; top: 28px; width: 320px; height: 64px; border: 2px solid #a0a2a4; border-radius: 8px; background: #f4f4f4; box-shadow: 0 4px 8px rgba(0,0,0,.3); display: flex; align-items: center; padding-left: 20px; gap: 18px; color: #8e9092; font-size: 26px; letter-spacing: .5px; }
.search svg { color: #6c6f71; }
.fab { position: absolute; width: 64px; height: 64px; border-radius: 8px; background: #fff; box-shadow: 0 2px 6px rgba(0,0,0,.35); display: flex; align-items: center; justify-content: center; }
.info { right: 48px; top: 48px; }
.info svg { color: #6c6f71; }
.lay { right: 32px; bottom: 48px; }
.zoom { position: absolute; left: 48px; bottom: 48px; width: 72px; height: 216px; border-radius: 8px; background: #fff; box-shadow: 0 2px 6px rgba(0,0,0,.35); font-size: 24px; }
.zoom div { height: 72px; display: flex; align-items: center; justify-content: center; border-bottom: 2px solid #e2e3e3; }
.zoom div:last-child { border: 0; }
.banner { position: absolute; left: 468px; bottom: 48px; width: 1292px; height: 72px; border-radius: 8px; background: #ecf2ff; box-shadow: 0 2px 6px rgba(0,0,0,.35); display: flex; align-items: center; padding-left: 24px; white-space: nowrap; }
.banner svg { color: #2f6bda; margin-right: 24px; }
.msg { font-size: 22px; font-weight: 500; letter-spacing: .26px; }
.more { margin-left: 15px; font-weight: 500; }
.attr { position: absolute; right: 16px; bottom: 16px; width: 402px; height: 31px; background: rgba(255,255,250,.3); border-radius: 6px 0 0 0; font-size: 18px; font-weight: 500; letter-spacing: .5px; display: flex; align-items: center; justify-content: center; }

.overlay { position: fixed; inset: 0; background: rgba(0,0,0,.5); padding: 344px 0 0 666px; }
.modal { width: 1536px; height: 728px; border-radius: 8px; background: #fff; box-shadow: 0 22px 30px -14px rgba(0,0,0,.2), 0 48px 76px 6px rgba(0,0,0,.14), 0 18px 92px 16px rgba(0,0,0,.12); }
.m-head { height: 128px; padding: 0 46px 0 48px; display: flex; align-items: center; justify-content: space-between; }
h1 { font-size: 32px; letter-spacing: .2px; }
.m-body { height: 472px; margin: 0 32px; padding: 23px 48px 0; border-radius: 8px; background: #f8f9f9; }
.lead, .sub { line-height: 43px; letter-spacing: .5px; }
.sub { color: #7d8082; font-weight: 400; letter-spacing: .57px; }
.cols { display: flex; height: 316px; margin-top: 15px; }
.col-l { width: 690px; padding: 32px 32px 0 0; border-right: 2px solid #dcdddd; }
.col-r { flex: 1; padding: 32px 0 0 32px; }
h4 { font-size: 26px; line-height: 32px; letter-spacing: .55px; }
label { display: block; font-size: 22px; line-height: 32px; font-weight: 500; letter-spacing: .4px; }
.off { margin-top: 20px; color: #c0c2c2; font-weight: 400; }
.field { height: 64px; border: 2px solid #babcbc; border-radius: 8px; display: flex; align-items: center; padding-left: 22px; }
.disabled { margin-top: 3px; padding-left: 31px; gap: 16px; background: #eeefef; color: #b9bbbb; font-weight: 500; letter-spacing: .4px; }
.disabled i { font-style: normal; font-size: 22px; color: #fff; width: 15px; }
.dist { display: flex; margin-top: 28px; }
.slide { width: 324px; margin-right: 48px; }
.slider { position: relative; height: 24px; margin-top: 19px; display: flex; align-items: center; }
.slider::before { content: ""; height: 4px; width: 100%; border-radius: 2px; background: #abc4f0; }
.slider i { position: absolute; left: -12px; width: 24px; height: 24px; border-radius: 50%; background: #2f6bda; }
.num, .unit, .one { font-weight: 500; }
.num { width: 132px; margin: 20px 24px 0 0; }
.unit { width: 126px; margin-top: 20px; justify-content: space-between; padding-right: 27px; }
.field .caret { color: #a4a6a8; }
.tract-l { display: flex; align-items: center; gap: 4px; margin-top: 12px; }
.tract-l svg { color: #7d8082; }
.tracts { display: flex; margin-top: 2px; }
.one { width: 120px; margin-top: 2px; justify-content: space-between; padding-right: 26px; }
.vr { width: 2px; height: 64px; margin: 0 28px 0 24px; background: #dcdddd; }
.tg { position: relative; width: 64px; height: 64px; border-radius: 8px; display: flex; align-items: center; justify-content: center; color: #7d8082; }
.sel { background: #e8edf7; color: #2f6bda; }
.tip { position: absolute; left: -212px; top: 76px; width: 488px; height: 38px; border-radius: 8px; background: #404245; color: #fff; font-size: 22px; letter-spacing: .3px; font-weight: 500; display: flex; align-items: center; justify-content: center; white-space: nowrap; }
.m-foot { height: 128px; padding: 0 32px 0 64px; display: flex; align-items: center; justify-content: space-between; }
.link { color: #2f6bda; font-weight: 500; }
.acts { display: flex; align-items: center; gap: 36px; }
.run { width: 350px; height: 64px; border-radius: 8px; background: #2f6bda; color: #fff; font-weight: 500; letter-spacing: .38px; display: flex; box-shadow: 0 3px 8px rgba(0,0,0,.25); }
.run-t { width: 270px; border-right: 2px solid #2558b4; display: flex; align-items: center; justify-content: center; }
.run-c { flex: 1; display: flex; align-items: center; justify-content: center; }
```
